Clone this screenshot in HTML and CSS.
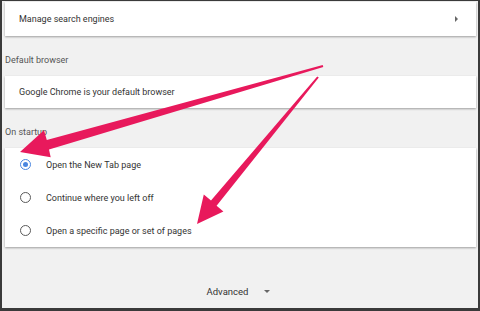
FILE: index.html
```html
<!DOCTYPE html>
<html lang="en">
<head>
    <meta charset="UTF-8">
    <meta name="viewport" content="width=device-width, initial-scale=1.0">
    <title>Settings</title>
    <link rel="stylesheet" href="styles.css">
</head>
<body>

<div class="frame">
    <div class="card link-row">
        <span>Manage search engines</span>
        <span class="chevron"></span>
    </div>

    <div class="section-title">Default browser</div>
    <div class="card">
        <div class="row">Google Chrome is your default browser</div>
    </div>

    <div class="section-title">On startup</div>
    <div class="card startup">
        <label class="radio-row"><span class="radio checked"></span>Open the New Tab page</label>
        <label class="radio-row"><span class="radio"></span>Continue where you left off</label>
        <label class="radio-row"><span class="radio"></span>Open a specific page or set of pages</label>
    </div>

    <div class="advanced">
        <span>Advanced</span>
        <span class="caret"></span>
    </div>

    <!-- annotation arrows drawn over the page -->
    <svg class="arrows" width="480" height="311" viewBox="0 0 480 311">
        <polygon points="322.7,65.0 46.8,140.0 44.0,130.3 20,152 50.7,157.2 49.0,149.6 323.3,67.0" />
        <polygon points="317.2,76.4 211.0,200.5 203.8,194.6 197,224 223.4,211.5 216.6,205.7 318.8,77.6" />
    </svg>
</div>

</body>
</html>
```

FILE: styles.css
```css
body {
    margin: 0;
    padding: 0;
    font-family: Roboto, "Liberation Sans", Arial, sans-serif;
    color: #333;
}
.frame {
    position: relative;
    width: 480px;
    height: 311px;
    box-sizing: border-box;
    background: #f1f1f1;
    border-top: 1px solid #3a3a3a;
    border-left: 2px solid #3a3a3a;
    border-right: 2px solid #3a3a3a;
    border-bottom: 3px solid #3a3a3a;
    padding: 1px 2px 0 3px;
    overflow: hidden;
}
.card {
    background: #fff;
    box-shadow: 0 1px 2px rgba(0, 0, 0, 0.35);
    font-size: 9px;
}
.link-row {
    height: 34px;
    display: flex;
    align-items: center;
    justify-content: space-between;
    padding: 0 18px 0 14px;
}
.chevron {
    width: 0;
    height: 0;
    border-top: 3px solid transparent;
    border-bottom: 3px solid transparent;
    border-left: 3px solid #666;
}
.section-title {
    font-size: 9px;
    color: #555;
    height: 40px;
    line-height: 12px;
    padding-top: 18px;
    box-sizing: border-box;
}
.row {
    height: 32px;
    display: flex;
    align-items: center;
    padding-left: 14px;
}
.startup {
    padding: 0;
}
.radio-row {
    height: 33px;
    display: flex;
    align-items: center;
    padding-left: 15px;
}
.radio {
    width: 11px;
    height: 11px;
    box-sizing: border-box;
    border: 1.5px solid #5a5a5a;
    border-radius: 50%;
    margin-right: 15px;
    position: relative;
}
.radio.checked {
    border-color: #4a86e0;
}
.radio.checked::after {
    content: "";
    position: absolute;
    left: 1.5px;
    top: 1.5px;
    width: 5px;
    height: 5px;
    border-radius: 50%;
    background: #4a86e0;
}
.advanced {
    display: flex;
    justify-content: center;
    align-items: center;
    gap: 16px;
    margin-top: 39px;
    font-size: 9.5px;
    color: #333;
    padding-right: 4px;
}
.caret {
    width: 0;
    height: 0;
    border-left: 3px solid transparent;
    border-right: 3px solid transparent;
    border-top: 3px solid #666;
}
.arrows {
    position: absolute;
    left: -2px;
    top: -1px;
}
.arrows polygon {
    fill: #e8195c;
}
```
